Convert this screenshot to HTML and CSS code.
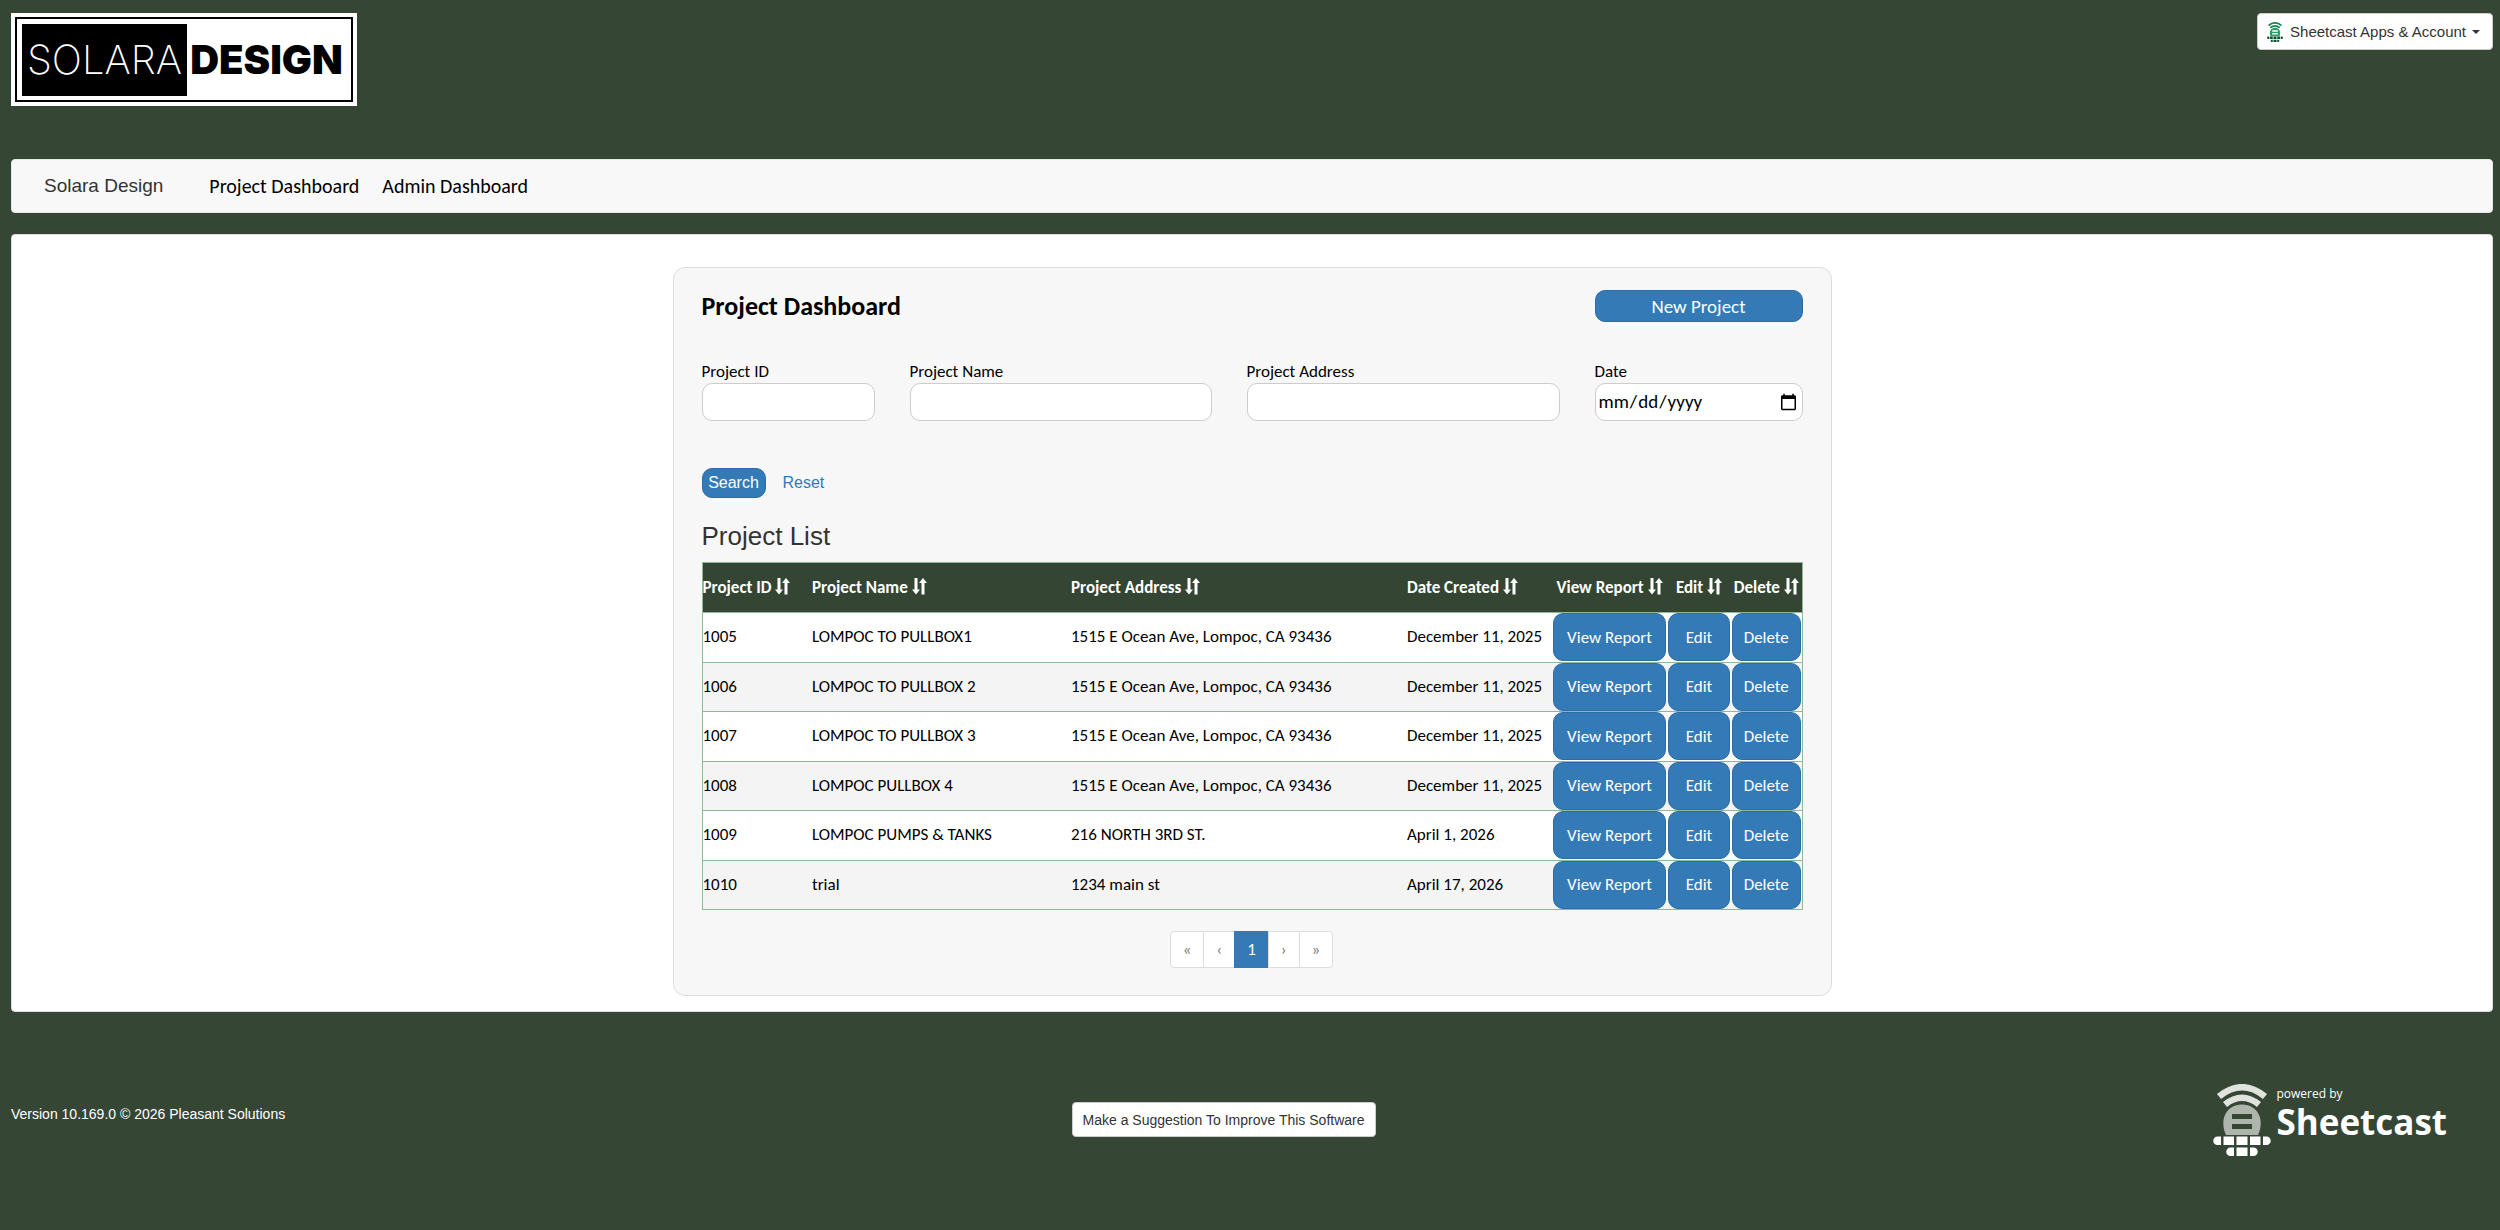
FILE: index.html
```html
<!DOCTYPE html>
<html lang="en">
<head>
<meta charset="utf-8">
<title>Project Dashboard</title>
<link rel="stylesheet" href="styles.css">
</head>
<body>
<svg class="symbols" width="0" height="0" aria-hidden="true">
  <symbol id="sort" viewBox="0 0 15 17">
    <path d="M2.500 0h3v11.500H8L4 16.500 0 11.500h2.500zM9.500 16.500h3V5H15L11 0 7 5h2.500z" fill="currentColor"/>
  </symbol>
  <symbol id="lighthouse" viewBox="0 0 58 72">
    <g fill="none" stroke-width="6.500">
      <path class="beam" d="M6 12.500Q29-6 52 12.500"/>
      <path class="beam" d="M12 20.500Q29 7 46 20.500"/>
    </g>
    <path class="dome" d="M13 51C6 36 13 20.500 29 20.500S52 36 45 51z"/>
    <path class="slot" d="M19 30h20v5H19zM19 40h20v5H19z"/>
    <g class="bricks">
      <path d="M8 52.500H4.500a4 4 0 0 0 0 8.500H8zM10.500 52.500h10.500V61H10.500zM23.500 52.500h11V61h-11zM37 52.500h10.500V61H37zM50 52.500h3.500a4 4 0 0 1 0 8.500H50zM21 63.500h-3.500a4 4 0 0 0 0 8.500H21zM23.500 63.500h11V72h-11zM37 63.500h3.500a4 4 0 0 1 0 8.500H37z"/>
    </g>
  </symbol>
</svg>

<header class="top">
  <a class="logo" href="#" aria-label="Solara Design">
    <span class="logo-frame"><span class="logo-light">SOLARA</span><span class="logo-bold">DESIGN</span></span>
  </a>
  <button class="btn-plain account" type="button">
    <svg class="account-icon" viewBox="0 0 58 72" aria-hidden="true"><use href="#lighthouse"/></svg>
    Sheetcast Apps &amp; Account
    <span class="caret"></span>
  </button>
</header>

<nav class="navbar">
  <a class="brand" href="#">Solara Design</a>
  <a href="#">Project Dashboard</a>
  <a href="#">Admin Dashboard</a>
</nav>

<main class="content">
  <section class="card">
    <div class="card-head">
      <h1>Project Dashboard</h1>
      <button class="btn new" type="button">New Project</button>
    </div>
    <form class="search">
      <div class="fields">
        <label>Project ID<input type="text"></label>
        <label>Project Name<input type="text"></label>
        <label>Project Address<input type="text"></label>
        <label>Date<input type="date"></label>
      </div>
      <div class="actions">
        <button class="btn submit" type="button">Search</button>
        <a href="#">Reset</a>
      </div>
    </form>
    <h2>Project List</h2>
    <table>
      <colgroup><col class="c-id"><col class="c-name"><col class="c-address"><col class="c-date"><col class="c-view"><col class="c-edit"><col class="c-delete"></colgroup>
      <thead>
        <tr>
          <th>Project ID <svg class="sort"><use href="#sort"/></svg></th>
          <th>Project Name <svg class="sort"><use href="#sort"/></svg></th>
          <th>Project Address <svg class="sort"><use href="#sort"/></svg></th>
          <th>Date Created <svg class="sort"><use href="#sort"/></svg></th>
          <th class="mid">View Report <svg class="sort"><use href="#sort"/></svg></th>
          <th class="mid">Edit <svg class="sort"><use href="#sort"/></svg></th>
          <th class="mid">Delete <svg class="sort"><use href="#sort"/></svg></th>
        </tr>
      </thead>
      <tbody>
        <tr><td>1005</td><td>LOMPOC TO PULLBOX1</td><td>1515 E Ocean Ave, Lompoc, CA 93436</td><td>December 11, 2025</td><td class="act"><button class="btn" type="button">View Report</button></td><td class="act"><button class="btn" type="button">Edit</button></td><td class="act"><button class="btn" type="button">Delete</button></td></tr>
        <tr><td>1006</td><td>LOMPOC TO PULLBOX 2</td><td>1515 E Ocean Ave, Lompoc, CA 93436</td><td>December 11, 2025</td><td class="act"><button class="btn" type="button">View Report</button></td><td class="act"><button class="btn" type="button">Edit</button></td><td class="act"><button class="btn" type="button">Delete</button></td></tr>
        <tr><td>1007</td><td>LOMPOC TO PULLBOX 3</td><td>1515 E Ocean Ave, Lompoc, CA 93436</td><td>December 11, 2025</td><td class="act"><button class="btn" type="button">View Report</button></td><td class="act"><button class="btn" type="button">Edit</button></td><td class="act"><button class="btn" type="button">Delete</button></td></tr>
        <tr><td>1008</td><td>LOMPOC PULLBOX 4</td><td>1515 E Ocean Ave, Lompoc, CA 93436</td><td>December 11, 2025</td><td class="act"><button class="btn" type="button">View Report</button></td><td class="act"><button class="btn" type="button">Edit</button></td><td class="act"><button class="btn" type="button">Delete</button></td></tr>
        <tr><td>1009</td><td>LOMPOC PUMPS &amp; TANKS</td><td>216 NORTH 3RD ST.</td><td>April 1, 2026</td><td class="act"><button class="btn" type="button">View Report</button></td><td class="act"><button class="btn" type="button">Edit</button></td><td class="act"><button class="btn" type="button">Delete</button></td></tr>
        <tr><td>1010</td><td>trial</td><td>1234 main st</td><td>April 17, 2026</td><td class="act"><button class="btn" type="button">View Report</button></td><td class="act"><button class="btn" type="button">Edit</button></td><td class="act"><button class="btn" type="button">Delete</button></td></tr>
      </tbody>
    </table>
    <nav class="pages" aria-label="Pages">
      <a href="#">«</a><a href="#">‹</a><a class="current" href="#">1</a><a href="#">›</a><a href="#">»</a>
    </nav>
  </section>
</main>

<footer class="foot">
  <p class="version">Version 10.169.0 © 2026 Pleasant Solutions</p>
  <button class="btn-plain suggest" type="button">Make a Suggestion To Improve This Software</button>
  <a class="powered" href="#">
    <svg class="powered-icon" viewBox="0 0 58 72" aria-hidden="true"><use href="#lighthouse"/></svg>
    <span class="powered-text"><span class="powered-by">powered by</span><span class="powered-name">Sheetcast</span></span>
  </a>
</footer>
</body>
</html>
```

FILE: styles.css
```css
* { box-sizing: border-box; }

body {
  margin: 0;
  padding: 13px 7px 0 11px;
  background: #364634;
  color: #333;
  font: 16px/20px "Liberation Sans", Arial, sans-serif;
}

a { text-decoration: none; }
.symbols { position: absolute; }

.top {
  display: flex;
  justify-content: space-between;
  align-items: flex-start;
  height: 146px;
}

.logo {
  padding: 4px;
  background: #fff;
  color: #000;
}

.logo-frame {
  display: flex;
  align-items: center;
  height: 85px;
  padding: 5px;
  border: 2px solid #000;
  font-family: Inter, sans-serif;
  font-size: 40px;
  line-height: 72px;
}

.logo-light {
  width: 165px;
  background: #000;
  color: #fff;
  font-weight: 200;
  text-align: center;
}

.logo-bold {
  width: 159px;
  font-weight: 900;
  text-align: center;
}

.btn-plain {
  border: 1px solid #ccc;
  border-radius: 4px;
  background: #fff;
  color: #333;
  font-family: inherit;
}

.account {
  display: flex;
  align-items: center;
  gap: 6px;
  height: 37px;
  padding: 0 12px 0 8px;
  font-size: 15px;
}

.account-icon {
  --beam: #1d8a54;
  --dome: #26a269;
  --slot: #fff;
  --bricks: #14532f;
  width: 18px;
  height: 20px;
}

.beam { stroke: var(--beam); }
.dome { fill: var(--dome); }
.slot { fill: var(--slot); }
.bricks { fill: var(--bricks); }

.caret {
  border: 4px solid transparent;
  border-top-color: #333;
  border-bottom: 0;
}

.navbar {
  display: flex;
  align-items: center;
  gap: 23px;
  height: 54px;
  padding: 0 32px;
  border: 1px solid #e7e7e7;
  border-radius: 4px;
  background: #f8f8f8;
  font: 20px/24px Carlito, Lato, sans-serif;
}

.navbar a { color: #000; }

.navbar .brand {
  margin-right: 23px;
  color: #333;
  font: 19px/24px "Liberation Sans", Arial, sans-serif;
}

.content {
  margin-top: 21px;
  padding: 32px 16px 15px;
  border: 1px solid #ddd;
  border-radius: 4px;
  background: #fff;
}

.card {
  max-width: 1159px;
  margin: 0 auto;
  padding: 22px 28px 27px;
  border: 1px solid #ddd;
  border-radius: 12px;
  background: #f7f7f7;
  color: #000;
  font: 17px/20px Carlito, Lato, sans-serif;
}

.card-head {
  display: flex;
  justify-content: space-between;
}

h1 {
  margin: 0;
  font-size: 26px;
  line-height: 32px;
}

.btn {
  border: 1px solid #2e6da4;
  border-radius: 10px;
  background: #337ab7;
  color: #fff;
  font-family: inherit;
  font-size: 17px;
}

.new {
  width: 208px;
  height: 32px;
  font-size: 19px;
}

.fields {
  display: grid;
  grid-template-columns: 173fr 302fr 313fr 208fr;
  gap: 35px;
  margin-top: 40px;
}

.fields label {
  display: flex;
  flex-direction: column;
  gap: 1px;
}

.fields input {
  width: 100%;
  height: 38px;
  padding: 0 2px;
  border: 1px solid #ccc;
  border-radius: 10px;
  background: #fff;
  font: 19px/24px Carlito, Lato, sans-serif;
}

.actions {
  display: flex;
  align-items: center;
  gap: 17px;
  margin-top: 47px;
  font: 16px/20px "Liberation Sans", Arial, sans-serif;
}

.actions a { color: #337ab7; }

.submit {
  width: 64px;
  height: 30px;
  padding: 0;
  font-size: 16px;
}

h2 {
  margin: 22px 0 10px;
  color: #333;
  font: 26px/32px "Liberation Sans", Arial, sans-serif;
}

table {
  width: 100%;
  height: 348px;
  table-layout: fixed;
  border: 1px solid #8fb996;
  border-collapse: collapse;
}

.c-id { width: 110px; }
.c-name { width: 259px; }
.c-date { width: 145px; }
.c-view { width: 115px; }
.c-edit { width: 64px; }
.c-delete { width: 71px; }

th {
  height: 50px;
  padding: 0;
  background: #344633;
  color: #fff;
  text-align: left;
  white-space: nowrap;
}

th.mid { text-align: center; }

.sort {
  width: 15px;
  height: 17px;
  vertical-align: -2px;
}

tbody tr {
  height: 49px;
  border-top: 1px solid #8fb996;
  background: #fff;
}

tbody tr:nth-child(even) { background: #f4f4f4; }

td {
  padding: 0;
  white-space: nowrap;
}

.act { padding: 0 1px; }

.act .btn {
  display: block;
  width: 100%;
  height: 48px;
  padding: 0;
}

.pages {
  display: flex;
  justify-content: center;
  margin-top: 21px;
}

.pages a {
  padding: 7px 12px;
  border: 1px solid #ddd;
  margin-left: -1px;
  background: #fff;
  color: #777;
  line-height: 21px;
}

.pages a:first-child { border-radius: 4px 0 0 4px; }
.pages a:last-child { border-radius: 0 4px 4px 0; }

.pages .current {
  border-color: #337ab7;
  background: #337ab7;
  color: #fff;
}

.foot {
  display: grid;
  grid-template-columns: 97fr auto 98fr;
  align-items: start;
  padding: 72px 46px 60px 0;
}

.version {
  margin: 20px 0 0;
  color: #fff;
  font-size: 14px;
}

.suggest {
  height: 35px;
  margin-top: 18px;
  padding: 0 10px;
  font-size: 14px;
}

.powered {
  --beam: #dfe3de;
  --dome: #aeb5ad;
  --slot: #364634;
  --bricks: #fff;
  display: flex;
  justify-self: end;
  gap: 5px;
  color: #fff;
}

.powered-icon { width: 58px; height: 72px; }

.powered-text {
  display: flex;
  flex-direction: column;
  padding-top: 3px;
  font-family: "Open Sans", sans-serif;
}

.powered-by {
  font-size: 12px;
  line-height: 14px;
}

.powered-name {
  font-size: 35px;
  font-weight: 700;
  line-height: 42px;
}
```
